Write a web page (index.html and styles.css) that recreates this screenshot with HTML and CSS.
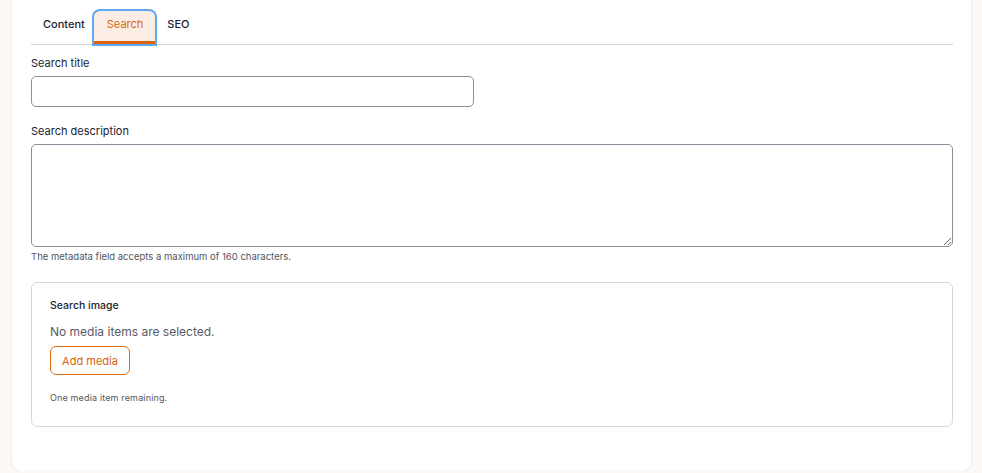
FILE: index.html
```html
<!DOCTYPE html>
<html lang="en">
<head>
  <meta charset="UTF-8">
  <meta name="viewport" content="width=device-width, initial-scale=1.0">
  <title>Edit page – search metadata</title>
  <link rel="stylesheet" href="styles.css">
</head>
<body>
  <div class="card">
    <ul class="tabs">
      <li class="tab">Content</li>
      <li class="tab active">Search</li>
      <li class="tab">SEO</li>
    </ul>

    <div class="field">
      <label class="label" for="search-title">Search title</label>
      <input class="input" id="search-title" type="text">
    </div>

    <div class="field">
      <label class="label" for="search-desc">Search description</label>
      <textarea class="textarea" id="search-desc"></textarea>
      <div class="help">The metadata field accepts a maximum of 160 characters.</div>
    </div>

    <fieldset class="media">
      <div class="media-title">Search image</div>
      <p class="media-empty">No media items are selected.</p>
      <button class="btn">Add media</button>
      <div class="help small">One media item remaining.</div>
    </fieldset>
  </div>
</body>
</html>
```

FILE: styles.css
```css
body {
  margin: 0;
  background-color: #fcf8f5;
  font-family: Inter, "Noto Sans", sans-serif;
  color: #222330;
}
.card {
  margin: -10px 11px 0 12px;
  height: 481px;
  box-sizing: border-box;
  background-color: #fff;
  border-radius: 0 0 10px 10px;
  box-shadow: 0 0 0 1px #f0eeec, 0 1px 3px rgba(0, 0, 0, 0.04);
  padding: 19px 18px 0 19px;
}
.tabs {
  display: flex;
  list-style: none;
  margin: 0;
  padding: 0;
  border-bottom: 1px solid #d4d4d8;
  height: 35px;
}
.tab {
  font-size: 11px;
  font-weight: 500;
  padding: 0 12px;
  line-height: 30px;
  height: 32px;
}
.tab.active {
  color: #d56a10;
  font-weight: 400;
  background-color: #fbede3;
  border-radius: 6px 6px 0 0;
  box-shadow: 0 0 0 2px #61a8f2;
  border-bottom: 3px solid #d9650f;
  margin: 2px 0 0 -3px;
  padding: 0 12px 0 13px;
  height: 30px;
  line-height: 27px;
}
.field {
  display: flex;
  flex-direction: column;
  margin-top: 10px;
}
.field + .field {
  margin-top: 16px;
}
.label {
  font-size: 11px;
  line-height: 16px;
  margin-bottom: 5px;
}
.input {
  width: 443px;
  height: 31px;
  box-sizing: border-box;
  border: 1px solid #8e8e9c;
  border-radius: 5px;
}
.textarea {
  width: 922px;
  height: 103px;
  box-sizing: border-box;
  border: 1px solid #8e8e9c;
  border-radius: 5px;
  resize: vertical;
}
.help {
  font-size: 9.5px;
  color: #55565b;
  margin-top: 4px;
}
.media {
  width: 922px;
  box-sizing: border-box;
  margin: 20px 0 0 0;
  border: 1px solid #d8d8db;
  border-radius: 6px;
  padding: 15px 18px 20px 18px;
  height: 145px;
}
.media-title {
  font-size: 10.5px;
  font-weight: 500;
  line-height: 16px;
}
.media-empty {
  margin: 10px 0 6px 0;
  font-size: 12px;
  color: #5a5b66;
  line-height: 16px;
}
.btn {
  font-family: Inter, "Noto Sans", sans-serif;
  font-size: 11px;
  color: #d5620d;
  background-color: #fff;
  border: 1px solid #dc6c14;
  border-radius: 6px;
  width: 80px;
  height: 29px;
  padding: 0;
  cursor: pointer;
}
.help.small {
  margin-top: 17px;
  font-size: 9px;
  letter-spacing: 0.15px;
}
```
